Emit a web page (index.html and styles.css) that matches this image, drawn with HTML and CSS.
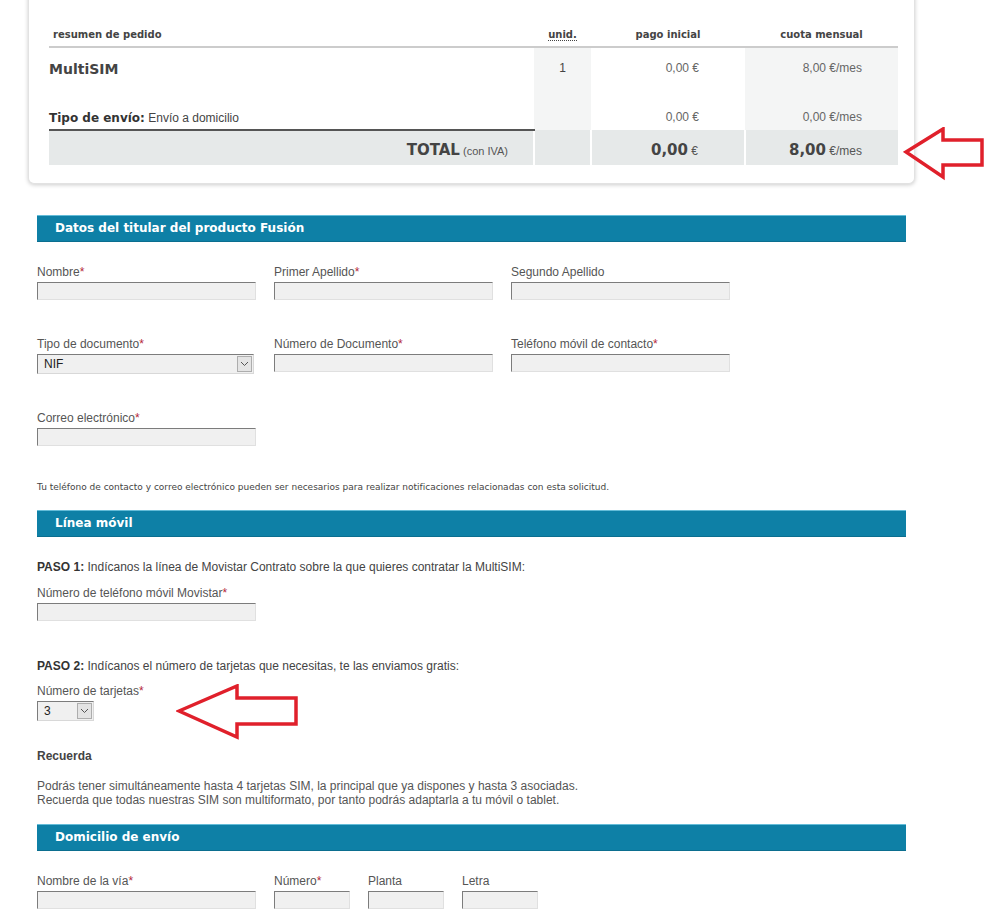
FILE: index.html
```html
<!DOCTYPE html>
<html lang="es">
<head>
    <meta charset="UTF-8">
    <meta name="viewport" content="width=device-width, initial-scale=1.0">
    <title>Resumen de pedido MultiSIM</title>
    <link rel="stylesheet" href="styles.css">
</head>
<body>
    <div class="page">
        <div class="card">
            <table class="summary">
                <colgroup>
                    <col class="col-name">
                    <col class="col-unid">
                    <col class="col-pago">
                    <col class="col-cuota">
                </colgroup>
                <thead>
                    <tr>
                        <th class="th-name">resumen de pedido</th>
                        <th class="shade"><abbr title="unidades">unid.</abbr></th>
                        <th>pago inicial</th>
                        <th class="shade">cuota mensual</th>
                    </tr>
                </thead>
                <tbody>
                    <tr class="row-product">
                        <td class="product">MultiSIM</td>
                        <td class="shade center">1</td>
                        <td class="price">0,00 &euro;</td>
                        <td class="shade fee">8,00 &euro;/mes</td>
                    </tr>
                    <tr class="row-shipping">
                        <td class="shipping"><b>Tipo de envío:</b> Envío a domicilio</td>
                        <td class="shade"></td>
                        <td class="price">0,00 &euro;</td>
                        <td class="shade fee">0,00 &euro;/mes</td>
                    </tr>
                    <tr class="row-total">
                        <td class="total-label"><span class="big">TOTAL</span> (con IVA)</td>
                        <td></td>
                        <td class="price"><span class="big">0,00</span> &euro;</td>
                        <td class="fee"><span class="big">8,00</span> &euro;/mes</td>
                    </tr>
                </tbody>
            </table>
        </div>

        <svg class="arrow arrow-total" width="84" height="54" viewBox="0 0 84 54">
            <polygon points="3,25 40,2 40,13 79,13 79,38 40,38 40,50" />
        </svg>

        <div class="form">
            <div class="bar">Datos del titular del producto Fusión</div>

            <div class="field-row first">
                <div class="field">
                    <label>Nombre<span class="req">*</span></label>
                    <div class="input"></div>
                </div>
                <div class="field">
                    <label>Primer Apellido<span class="req">*</span></label>
                    <div class="input"></div>
                </div>
                <div class="field">
                    <label>Segundo Apellido</label>
                    <div class="input"></div>
                </div>
            </div>

            <div class="field-row">
                <div class="field">
                    <label>Tipo de documento<span class="req">*</span></label>
                    <div class="select wide">
                        <span>NIF</span>
                        <span class="select-btn">
                            <svg width="9" height="6" viewBox="0 0 9 6"><polyline points="1,1 4.5,4.5 8,1" /></svg>
                        </span>
                    </div>
                </div>
                <div class="field">
                    <label>Número de Documento<span class="req">*</span></label>
                    <div class="input"></div>
                </div>
                <div class="field">
                    <label>Teléfono móvil de contacto<span class="req">*</span></label>
                    <div class="input"></div>
                </div>
            </div>

            <div class="field-row">
                <div class="field">
                    <label>Correo electrónico<span class="req">*</span></label>
                    <div class="input"></div>
                </div>
            </div>

            <p class="note">Tu teléfono de contacto y correo electrónico pueden ser necesarios para realizar notificaciones relacionadas con esta solicitud.</p>

            <div class="bar bar-gap">Línea móvil</div>

            <p class="step"><b>PASO 1:</b> Indícanos la línea de Movistar Contrato sobre la que quieres contratar la MultiSIM:</p>
            <div class="field step-field">
                <label>Número de teléfono móvil Movistar<span class="req">*</span></label>
                <div class="input"></div>
            </div>

            <p class="step step-two"><b>PASO 2:</b> Indícanos el número de tarjetas que necesitas, te las enviamos gratis:</p>
            <div class="field step-field cards">
                <label>Número de tarjetas<span class="req">*</span></label>
                <div class="select narrow">
                    <span>3</span>
                    <span class="select-btn">
                        <svg width="9" height="6" viewBox="0 0 9 6"><polyline points="1,1 4.5,4.5 8,1" /></svg>
                    </span>
                </div>
            </div>

            <svg class="arrow arrow-cards" width="124" height="56" viewBox="0 0 124 56">
                <polygon points="3,27 61,2 61,14 120,14 120,40 61,40 61,53" />
            </svg>

            <p class="remember">Recuerda</p>
            <p class="remember-text">Podrás tener simultáneamente hasta 4 tarjetas SIM, la principal que ya dispones y hasta 3 asociadas.<br>Recuerda que todas nuestras SIM son multiformato, por tanto podrás adaptarla a tu móvil o tablet.</p>

            <div class="bar bar-gap">Domicilio de envío</div>

            <div class="field-row first address">
                <div class="field">
                    <label>Nombre de la vía<span class="req">*</span></label>
                    <div class="input"></div>
                </div>
                <div class="field small">
                    <label>Número<span class="req">*</span></label>
                    <div class="input"></div>
                </div>
                <div class="field small">
                    <label>Planta</label>
                    <div class="input"></div>
                </div>
                <div class="field small">
                    <label>Letra</label>
                    <div class="input"></div>
                </div>
            </div>
        </div>
    </div>
</body>
</html>
```

FILE: styles.css
```css
body {
    margin: 0;
    font-family: "Liberation Sans", Arial, sans-serif;
    font-size: 12px;
    color: #555;
    background: #fff;
}
p {
    margin: 0;
}
.page {
    position: relative;
    width: 887px;
    margin-left: 28px;
    padding-bottom: 40px;
}

/* order summary card */
.card {
    margin-top: -16px;
    padding: 40px 18px 18px 20px;
    background: #fff;
    border: 1px solid #e2e2e2;
    border-top: none;
    border-radius: 0 0 6px 6px;
    box-shadow: 0 1px 4px rgba(0, 0, 0, 0.2);
}
.summary {
    width: 849px;
    border-collapse: collapse;
    table-layout: fixed;
    color: #444;
}
.col-name { width: 485px; }
.col-unid { width: 57px; }
.col-pago { width: 154px; }
.col-cuota { width: 153px; }
.summary th {
    font-family: "DejaVu Sans", Verdana, sans-serif;
    font-size: 10px;
    font-weight: bold;
    line-height: 14px;
    padding: 4px 0;
    text-align: center;
    border-bottom: 2px solid #ccc;
    background: #fff;
}
.summary th.th-name {
    text-align: left;
    padding-left: 4px;
}
.summary abbr {
    text-decoration: none;
    border-bottom: 1px dotted #444;
}
.summary td {
    padding: 0;
    line-height: 14px;
}
.shade {
    background: #f4f5f5;
}
.center {
    text-align: center;
}
.row-product td {
    height: 43px;
    vertical-align: top;
    padding-top: 13px;
    box-sizing: border-box;
}
.row-product td.product {
    padding-top: 14px;
}
.product {
    font-family: "DejaVu Sans", Verdana, sans-serif;
    font-size: 14px;
    font-weight: bold;
}
.price {
    text-align: right;
    padding-right: 46px !important;
    color: #666;
}
.fee {
    text-align: right;
    padding-right: 36px !important;
    color: #666;
}
.row-shipping td {
    height: 40px;
    vertical-align: bottom;
    padding-bottom: 6px;
    box-sizing: border-box;
}
.shipping {
    border-bottom: 2px solid #555;
    padding-bottom: 4px !important;
}
.shipping b {
    font-family: "DejaVu Sans", Verdana, sans-serif;
    font-size: 12px;
    color: #333;
}
.row-total td {
    height: 35px;
    box-sizing: border-box;
    background: #e6e9e9;
    vertical-align: middle;
    padding-top: 5px;
    border-left: 2px solid #fff;
    color: #555;
}
.row-total td:first-child {
    border-left: none;
}
.total-label {
    text-align: right;
    padding-right: 25px !important;
    font-size: 11px;
}
.big {
    font-family: "DejaVu Sans", Verdana, sans-serif;
    font-size: 15px;
    font-weight: bold;
    color: #444;
}

/* arrows drawn over the page */
.arrow {
    position: absolute;
}
.arrow polygon {
    fill: none;
    stroke: #e0202b;
    stroke-width: 3.5;
    stroke-linejoin: miter;
}
.arrow-total {
    left: 875px;
    top: 143px;
}
.arrow-cards {
    left: 148px;
    top: 700px;
}

/* form */
.form {
    width: 869px;
    margin-top: 31px;
    padding-left: 9px;
}
.bar {
    height: 25px;
    line-height: 25px;
    padding-left: 18px;
    background: #0e80a6;
    border-top: 1px solid #64bcd8;
    border-bottom: 1px solid #0b6e8f;
    color: #fff;
    font-family: "DejaVu Sans", Verdana, sans-serif;
    font-size: 12px;
    font-weight: bold;
}
.bar-gap {
    margin-top: 17px;
}
.field-row {
    display: flex;
    gap: 18px;
    margin-top: 37px;
}
.field-row.first {
    margin-top: 23px;
}
.field {
    width: 219px;
}
.field.small {
    width: 76px;
}
.field-row.address {
    gap: 18px;
}
.field label {
    display: block;
    line-height: 14px;
    margin-bottom: 3px;
    color: #555;
    white-space: nowrap;
}
.req {
    color: #b5283a;
}
.input {
    height: 18px;
    box-sizing: border-box;
    background: #f0f0f0;
    border: 1px solid;
    border-color: #7c7c7c #e0e0e0 #e0e0e0 #7c7c7c;
}
.select {
    display: flex;
    align-items: center;
    justify-content: space-between;
    height: 20px;
    box-sizing: border-box;
    padding: 1px 1px 1px 6px;
    background: #f0f0f0;
    border: 1px solid;
    border-color: #7c7c7c #d8d8d8 #d8d8d8 #7c7c7c;
    color: #222;
    line-height: 14px;
}
.select.wide {
    width: 217px;
}
.select.narrow {
    width: 57px;
}
.select-btn {
    display: flex;
    align-items: center;
    justify-content: center;
    width: 15px;
    height: 16px;
    box-sizing: border-box;
    background: #e4e4e4;
    border: 1px solid #adadad;
}
.select-btn polyline {
    fill: none;
    stroke: #555;
    stroke-width: 1;
}
.note {
    margin-top: 36px;
    font-family: "DejaVu Sans", Verdana, sans-serif;
    font-size: 9px;
    line-height: 11px;
    color: #444;
}
.step {
    margin-top: 23px;
    line-height: 14px;
    color: #444;
}
.step b {
    color: #333;
}
.step-field {
    margin-top: 12px;
}
.step-two {
    margin-top: 38px;
}
.step-field.cards {
    margin-top: 11px;
}
.remember {
    margin-top: 28px;
    line-height: 14px;
    font-weight: bold;
    color: #444;
}
.remember-text {
    margin-top: 16px;
    line-height: 14px;
    color: #555;
}
```
